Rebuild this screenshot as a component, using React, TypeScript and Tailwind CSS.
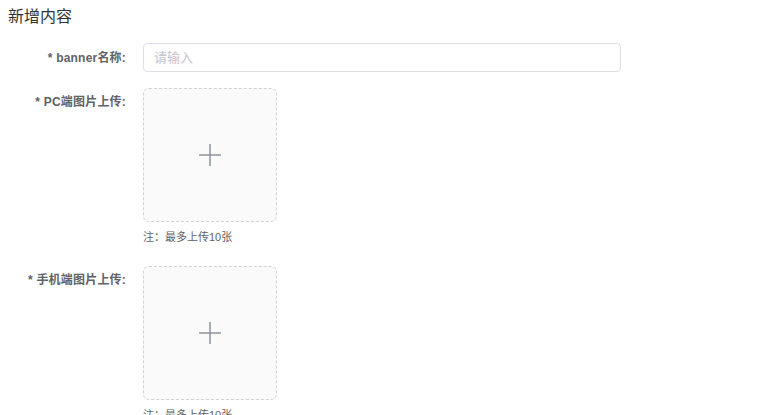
import React from "react";

const font = { fontFamily: '"Liberation Sans", "Noto Sans CJK SC", sans-serif' };

function Plus() {
  return (
    <svg width="22" height="22" viewBox="0 0 22 22" className="block">
      <line x1="0" y1="11" x2="22" y2="11" stroke="#8c939d" strokeWidth="1.5" />
      <line x1="11" y1="0" x2="11" y2="22" stroke="#8c939d" strokeWidth="1.5" />
    </svg>
  );
}

function UploadItem({ label }: { label: string }) {
  return (
    <div className="flex mb-[16px]">
      <div className="w-[143px] shrink-0 pr-[17px] text-right text-[12px] font-bold leading-[28px] text-[#606266] tracking-[0.2px]">
        {label}
      </div>
      <div className="flex flex-col">
        <div className="w-[134px] h-[134px] border border-dashed border-[#cfd2d6] rounded-[6px] bg-[#fafafa] flex items-center justify-center">
          <Plus />
        </div>
        <div className="text-[11px] leading-[20px] pt-[5px] pb-[3px] text-[#606266]">注：最多上传10张</div>
      </div>
    </div>
  );
}

export default function App() {
  return (
    <div className="w-[779px] h-[415px] overflow-hidden bg-white" style={font}>
      <div className="pl-[8px] pt-[6px] text-[16px] leading-[22px] text-[#333333]">新增内容</div>
      <div className="mt-[15px]">
        <div className="flex mb-[16px]">
          <div className="w-[143px] h-[29px] shrink-0 pr-[17px] text-right text-[12px] font-bold leading-[31px] text-[#606266] tracking-[0.2px]">
            * banner名称:
          </div>
          <input
            className="w-[478px] h-[29px] border border-[#dcdfe6] rounded-[4px] px-[10px] text-[13px] text-[#606266] placeholder:text-[#c0c4cc] outline-none"
            placeholder="请输入"
            style={font}
          />
        </div>
        <UploadItem label="* PC端图片上传:" />
        <UploadItem label="* 手机端图片上传:" />
      </div>
    </div>
  );
}
